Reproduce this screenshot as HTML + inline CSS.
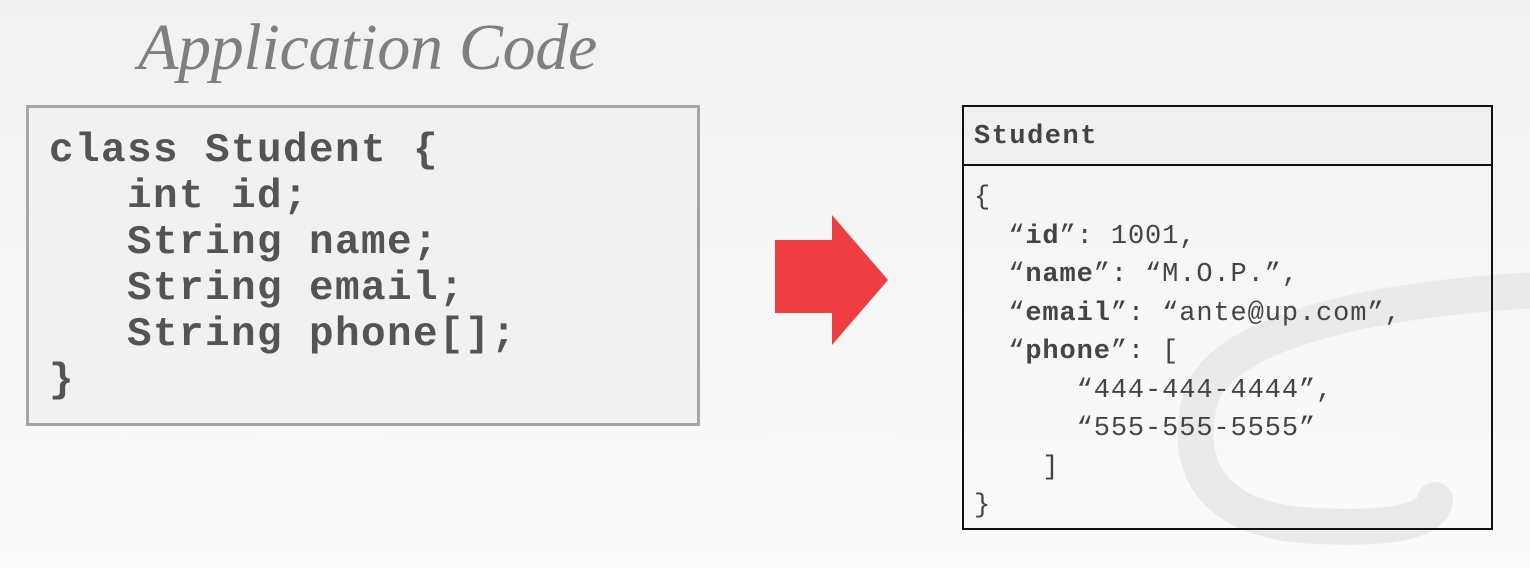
<!DOCTYPE html>
<html><head><meta charset="utf-8"><style>
body{margin:0;width:1530px;height:568px;overflow:hidden;background:linear-gradient(#f1f1f1,#fbfbfb);position:relative;font-family:"Liberation Mono",monospace}
.t{position:absolute;left:138px;top:10px;font:italic 66px "Liberation Serif",serif;color:#7f7f7f;letter-spacing:-0.3px}
.code{position:absolute;left:26px;top:105px;width:668px;height:315px;border:3px solid #a6a6a6;background:#f1f1f1}
.code pre{margin:0;position:absolute;left:20px;top:20px;font:bold 41px/46px "Liberation Mono",monospace;letter-spacing:1.4px;color:#545454}
.box{position:absolute;left:962px;top:105px;width:527px;height:421px;border:2px solid #111;}
.hd{height:57px;border-bottom:2px solid #111;background:rgba(240,240,240,0.9);font:bold 27px/60px "Liberation Mono",monospace;color:#444;padding-left:10px;letter-spacing:1.5px}
.box pre{margin:0;position:absolute;left:10px;top:72px;font:27px/38.5px "Liberation Mono",monospace;color:#444;letter-spacing:0.9px}
b{font-weight:bold}
</style></head><body>
<svg width="1530" height="568" style="position:absolute;left:0;top:0">
<path d="M1540 290 C1380 298 1220 330 1200 400 C1185 460 1205 515 1300 525 C1380 530 1430 525 1435 500" fill="none" stroke="#eaeaea" stroke-width="36" stroke-linecap="round"/>
<polygon points="775,240 832,240 832,215 888,280 832,345 832,313 775,313" fill="#ef3e42"/>
</svg>
<div class="t">Application Code</div>
<div class="code"><pre>class Student {
   int id;
   String name;
   String email;
   String phone[];
}</pre></div>
<div class="box"><div class="hd">Student</div>
<pre>{
  “<b>id</b>”: 1001,
  “<b>name</b>”: “M.O.P.”,
  “<b>email</b>”: “ante@up.com”,
  “<b>phone</b>”: [
      “444-444-4444”,
      “555-555-5555”
    ]
}</pre></div>
</body></html>
